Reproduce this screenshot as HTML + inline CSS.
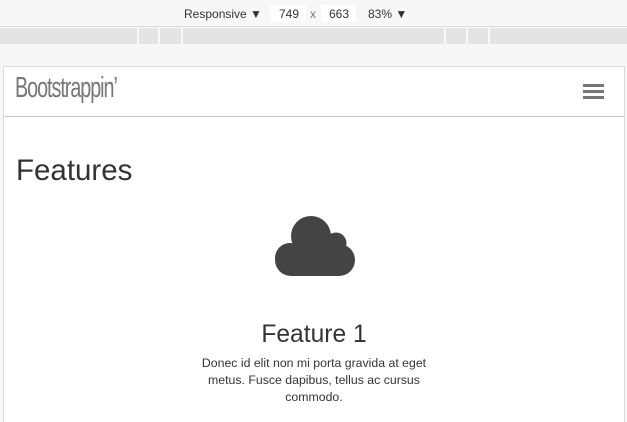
<!DOCTYPE html>
<html style="overflow:hidden;height:422px"><head><meta charset="utf-8"><style>
*{margin:0;padding:0;box-sizing:border-box}
body{width:627px;height:422px;overflow:hidden;background:#f7f7f7;font-family:"Liberation Sans",sans-serif;position:relative}
.top{position:absolute;left:0;top:0;width:627px;height:27px;background:#f7f7f7;border-bottom:1px solid #dcdcdc;font-size:12px;color:#333}
.top span{position:absolute;top:7px}
.box{position:absolute;top:5px;height:17px;background:#fff}
.ruler{position:absolute;left:0;top:28px;width:627px;height:16px;background:#e4e4e4}
.sep{position:absolute;top:28px;width:2px;height:16px;background:#f7f7f7}
.frame{position:absolute;left:3px;top:66px;width:622px;height:356px;background:#fff;border:1px solid #ddd;border-bottom:none}
.nav{height:50px;border-bottom:1px solid #c8c8c8;position:relative}
.logo{position:absolute;left:11px;top:5px;font-size:29px;color:#777;letter-spacing:-1.5px;transform:scaleX(.68);transform-origin:left}
.hb{position:absolute;left:579px;width:21px;height:3px;background:#777}
h1{position:absolute;left:12px;top:87px;font-weight:normal;font-size:29.5px;color:#333}
h2{position:absolute;left:0;width:620px;text-align:center;top:254px;font-weight:normal;font-size:24.6px;color:#333}
p{position:absolute;left:185px;width:250px;text-align:center;top:288px;font-size:12.3px;line-height:17px;color:#333}
</style></head><body>
<div class="top">
<span style="left:184px">Responsive ▼</span>
<div class="box" style="left:270px;width:36px"></div><span style="left:279px">749</span>
<span style="left:310px;color:#777">x</span>
<div class="box" style="left:321px;width:35px"></div><span style="left:329px">663</span>
<span style="left:368px">83% ▼</span>
</div>
<div class="ruler"></div>
<div class="sep" style="left:137px"></div><div class="sep" style="left:158px"></div><div class="sep" style="left:181px"></div>
<div class="sep" style="left:444px"></div><div class="sep" style="left:466px"></div><div class="sep" style="left:488px"></div>
<div class="frame">
<div class="nav">
<div class="logo">Bootstrappin’</div>
<div class="hb" style="top:17px"></div><div class="hb" style="top:23px"></div><div class="hb" style="top:29px"></div>
</div>
<h1>Features</h1>
<svg style="position:absolute;left:270px;top:149px" width="82" height="62" viewBox="0 0 82 62">
<g fill="#444">
<circle cx="37" cy="20" r="20"/>
<circle cx="62" cy="27" r="10.5"/>
<rect x="1" y="28" width="80" height="32" rx="16"/>
<circle cx="16" cy="42" r="15"/>
</g></svg>
<h2>Feature 1</h2>
<p>Donec id elit non mi porta gravida at eget metus. Fusce dapibus, tellus ac cursus commodo.</p>
</div>
</body></html>
